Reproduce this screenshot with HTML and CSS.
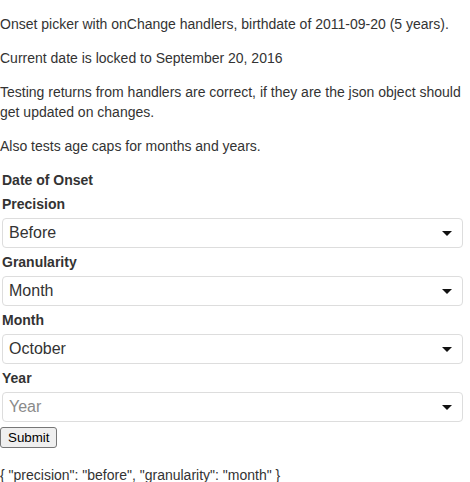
FILE: index.html
```html
<!DOCTYPE html>
<html>
<head>
<meta charset="utf-8">
<link rel="stylesheet" href="styles.css">
</head>
<body>
<p class="intro">Onset picker with onChange handlers, birthdate of 2011-09-20 (5 years).</p>
<p class="intro">Current date is locked to September 20, 2016</p>
<p class="intro">Testing returns from handlers are correct, if they are the json object should get updated on changes.</p>
<p class="intro">Also tests age caps for months and years.</p>
<form class="onset">
  <div class="fields">
    <div class="title">Date of Onset</div>
    <label class="lbl">Precision</label>
    <div class="select"><span class="val">Before</span><svg class="caret" width="10" height="5" viewBox="0 0 10 5"><path d="M0 0H10L5 5Z" fill="#111"/></svg></div>
    <label class="lbl">Granularity</label>
    <div class="select"><span class="val">Month</span><svg class="caret" width="10" height="5" viewBox="0 0 10 5"><path d="M0 0H10L5 5Z" fill="#111"/></svg></div>
    <label class="lbl">Month</label>
    <div class="select"><span class="val">October</span><svg class="caret" width="10" height="5" viewBox="0 0 10 5"><path d="M0 0H10L5 5Z" fill="#111"/></svg></div>
    <label class="lbl">Year</label>
    <div class="select"><span class="val placeholder">Year</span><svg class="caret" width="10" height="5" viewBox="0 0 10 5"><path d="M0 0H10L5 5Z" fill="#111"/></svg></div>
  </div>
  <button type="button" class="submit">Submit</button>
</form>
<p class="json">{ "precision": "before", "granularity": "month" }</p>
</body>
</html>
```
FILE: styles.css
```css
html, body {
  margin: 0;
  padding: 0;
  background: #fff;
}
body {
  font-family: "Liberation Sans", Arial, sans-serif;
  font-size: 14px;
  line-height: 20px;
  color: #333;
}
.intro {
  margin: 14px 0;
}
.onset {
  margin: 0;
}
.fields {
  display: flex;
  flex-direction: column;
  gap: 4px;
  padding: 0 7px 0 2px;
}
.title, .lbl {
  font-weight: 700;
  line-height: 20px;
  display: block;
}
.select {
  height: 30px;
  box-sizing: border-box;
  border: 1px solid #ddd;
  border-radius: 4px;
  background: #fff;
  display: flex;
  align-items: center;
  padding: 0 10px 0 6px;
  font-size: 16px;
}
.val {
  flex: 1;
  color: #333;
}
.placeholder {
  color: #8a8a8a;
}
.caret {
  display: block;
}
.submit {
  margin-top: 5px;
  font-family: "Liberation Sans", Arial, sans-serif;
  font-size: 13.33px;
  height: 21px;
  padding: 1px 7px;
  background: #efefef;
  border: 1px solid #767676;
  border-radius: 3px;
  color: #000;
  display: block;
}
.json {
  margin: 17px 0 0;
}
```
